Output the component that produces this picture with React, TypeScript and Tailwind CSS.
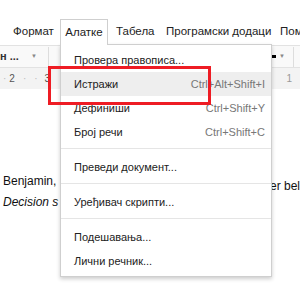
import React from 'react';

type Item = { label: string; shortcut?: string; active?: boolean };

const GROUPS: Item[][] = [
  [
    { label: 'Провера правописа...' },
    { label: 'Истражи', shortcut: 'Ctrl+Alt+Shift+I', active: true },
    { label: 'Дефиниши', shortcut: 'Ctrl+Shift+Y' },
    { label: 'Број речи', shortcut: 'Ctrl+Shift+C' },
  ],
  [{ label: 'Преведи документ...' }],
  [{ label: 'Уређивач скрипти...' }],
  [{ label: 'Подешавања...' }, { label: 'Лични речник...' }],
];

const ToolsMenu: React.FC = () => (
  <div className="absolute left-[60px] top-[19px] w-[212px]">
    {/* Tab */}
    <div className="relative z-10 w-[48px] h-[26px] bg-white border border-b-0 border-[#cfcfcf] flex items-center justify-center text-[11.5px] text-[#222]">
      Алатке
    </div>
    {/* Dropdown body */}
    <div className="-mt-px bg-white border border-[#cfcfcf] shadow-[0_2px_4px_rgba(0,0,0,0.2)] py-[3px]">
      {GROUPS.map((group, gi) => (
        <div key={gi} className={gi > 0 ? 'border-t border-[#e5e5e5] mt-[4px] pt-[6px]' : ''}>
          {group.map(it => (
            <div
              key={it.label}
              className={`h-[24px] flex items-center justify-between pl-[13px] pr-[6px] text-[11px] ${it.active ? 'bg-[#eeeeee]' : ''}`}
            >
              <span className="text-[#222]">{it.label}</span>
              {it.shortcut && <span className="text-[#777]">{it.shortcut}</span>}
            </div>
          ))}
        </div>
      ))}
    </div>
  </div>
);

export default function App() {
  return (
    <div className="relative w-[300px] h-[283px] overflow-hidden bg-white font-['Liberation_Sans',Arial,sans-serif]">
      {/* Menu bar */}
      <div className="h-[19px]" />
      <div className="h-[26px] flex items-center text-[11.5px] text-[#222] whitespace-nowrap">
        <span className="ml-[13px] w-[47px] shrink-0">Формат</span>
        <span className="w-[48px] shrink-0" />
        <span className="ml-[8px] w-[50px] shrink-0">Табела</span>
        <span className="w-[114px] shrink-0">Програмски додаци</span>
        <span className="shrink-0">Помоћ</span>
      </div>

      {/* Toolbar */}
      <div className="h-[22px] border-t border-[#e2e2e2] bg-[#f9f9f9] flex items-center text-[11px] text-[#333] whitespace-nowrap">
        <span className="font-bold">н ...</span>
        <span className="ml-[12px] text-[6px] text-[#888]">▼</span>
        <div className="ml-[11px] w-px h-[20px] bg-[#ddd]" />
        <span className="ml-[12px] font-bold">A</span>
        <div className="ml-auto flex items-center">
          <div className="w-[7px] h-[3px] bg-black" />
          <span className="ml-[3px] text-[6px] text-[#888]">▼</span>
          <div className="ml-[8px] w-px h-[20px] bg-[#ddd]" />
          <div className="w-[6px]" />
        </div>
      </div>

      {/* Ruler */}
      <div className="h-[22px] border-t border-[#e2e2e2] bg-[#f3f3f3] flex items-center text-[10px] text-[#555]">
        <span className="ml-[3px] text-[#bbb]">·</span>
        <span className="ml-[3px]">2</span>
        <span className="ml-[8px] text-[#bbb]">·</span>
        <span className="ml-[8px] text-[#bbb]">·</span>
        <span className="ml-[7px]">3</span>
        <div className="ml-auto mr-[8px] text-[#999]">1</div>
      </div>

      {/* Document */}
      <div className="pt-[83px] pl-[3px] text-[12px] text-[#111] leading-[19px]">
        <div className="flex justify-between">
          <span>Benjamin,</span>
          <span className="mt-[5px]">er bel</span>
        </div>
        <div className="italic -mt-[3px]">Decision s</div>
      </div>

      <ToolsMenu />

      {/* Annotation */}
      <div className="absolute left-[48px] top-[66px] w-[163px] h-[39px] border-[3px] border-[#ee1c24] z-20" />
    </div>
  );
}
